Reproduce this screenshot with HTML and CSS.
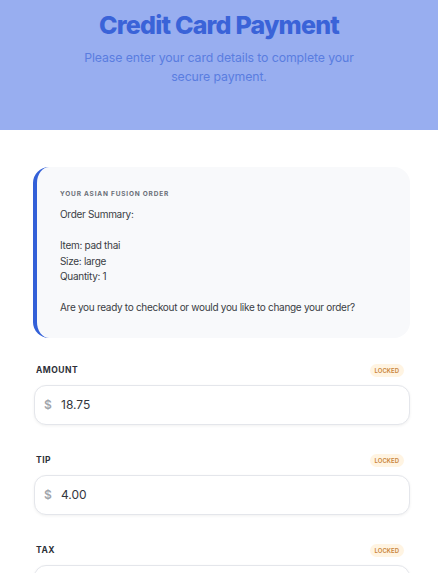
FILE: index.html
```html
<!DOCTYPE html>
<html lang="en">
<head>
    <meta charset="UTF-8">
    <meta name="viewport" content="width=device-width, initial-scale=1.0">
    <title>Credit Card Payment</title>
    <link rel="stylesheet" href="styles.css">
</head>
<body>
    <div class="hero">
        <h1>Credit Card Payment</h1>
        <p>Please enter your card details to complete your secure payment.</p>
    </div>

    <div class="content">
        <!-- Order summary -->
        <div class="order-card">
            <div class="order-title">YOUR ASIAN FUSION ORDER</div>
            <p>Order Summary:</p>
            <p class="gap">Item: pad thai</p>
            <p>Size: large</p>
            <p>Quantity: 1</p>
            <p class="gap">Are you ready to checkout or would you like to change your order?</p>
        </div>

        <div class="field">
            <div class="field-head">
                <label>AMOUNT</label>
                <span class="badge">LOCKED</span>
            </div>
            <div class="input"><span class="currency">$</span><span class="value">18.75</span></div>
        </div>

        <div class="field">
            <div class="field-head">
                <label>TIP</label>
                <span class="badge">LOCKED</span>
            </div>
            <div class="input"><span class="currency">$</span><span class="value">4.00</span></div>
        </div>

        <div class="field">
            <div class="field-head">
                <label>TAX</label>
                <span class="badge">LOCKED</span>
            </div>
            <div class="input"></div>
        </div>
    </div>
</body>
</html>
```

FILE: styles.css
```css
* {
    margin: 0;
    padding: 0;
    box-sizing: border-box;
}

body {
    font-family: Inter, "Noto Sans", sans-serif;
    background: #fff;
    color: #3a3d44;
    overflow: hidden;
}

.hero {
    background: #98aef0;
    height: 130px;
    padding: 8px 80px 0;
    text-align: center;
}

.hero h1 {
    font-size: 25px;
    font-weight: 800;
    letter-spacing: -0.8px;
    color: #3a63d8;
    line-height: 34px;
}

.hero p {
    margin-top: 6px;
    font-size: 12.3px;
    letter-spacing: -0.1px;
    line-height: 19px;
    color: #5a7de0;
}

.content {
    padding: 37px 28px 0 33px;
}

.order-card {
    background: #f8f9fb;
    border-left: 4px solid #3360d8;
    border-radius: 16px;
    padding: 23px 20px 22px 23px;
}

.order-title {
    font-size: 6.5px;
    font-weight: 700;
    letter-spacing: 0.8px;
    color: #6b6f78;
    margin-bottom: 9px;
}

.order-card p {
    font-size: 10px;
    letter-spacing: -0.3px;
    line-height: 15.5px;
    color: #3a3d44;
}

.order-card p.gap {
    margin-top: 15.5px;
}

.field {
    margin-top: 26px;
}

.field + .field {
    margin-top: 29px;
}

.field-head {
    display: flex;
    justify-content: space-between;
    align-items: center;
    padding: 0 6px 0 3px;
    margin-bottom: 8px;
}

.field-head label {
    font-size: 8.5px;
    font-weight: 700;
    letter-spacing: 0.5px;
    color: #2d3038;
}

.badge {
    background: #fff4e2;
    color: #c9853a;
    font-size: 6px;
    font-weight: 600;
    padding: 3px 5px;
    border-radius: 8px;
}

.input {
    margin-left: 1px;
    height: 40px;
    border: 1.5px solid #e4e6eb;
    border-radius: 12px;
    background: #fff;
    box-shadow: 0 1px 3px rgba(0, 0, 0, 0.06);
    display: flex;
    align-items: center;
    padding-left: 9px;
    font-size: 12px;
}

.currency {
    color: #a0a4ab;
    font-weight: 600;
    width: 17px;
}

.value {
    color: #33363d;
}
```
